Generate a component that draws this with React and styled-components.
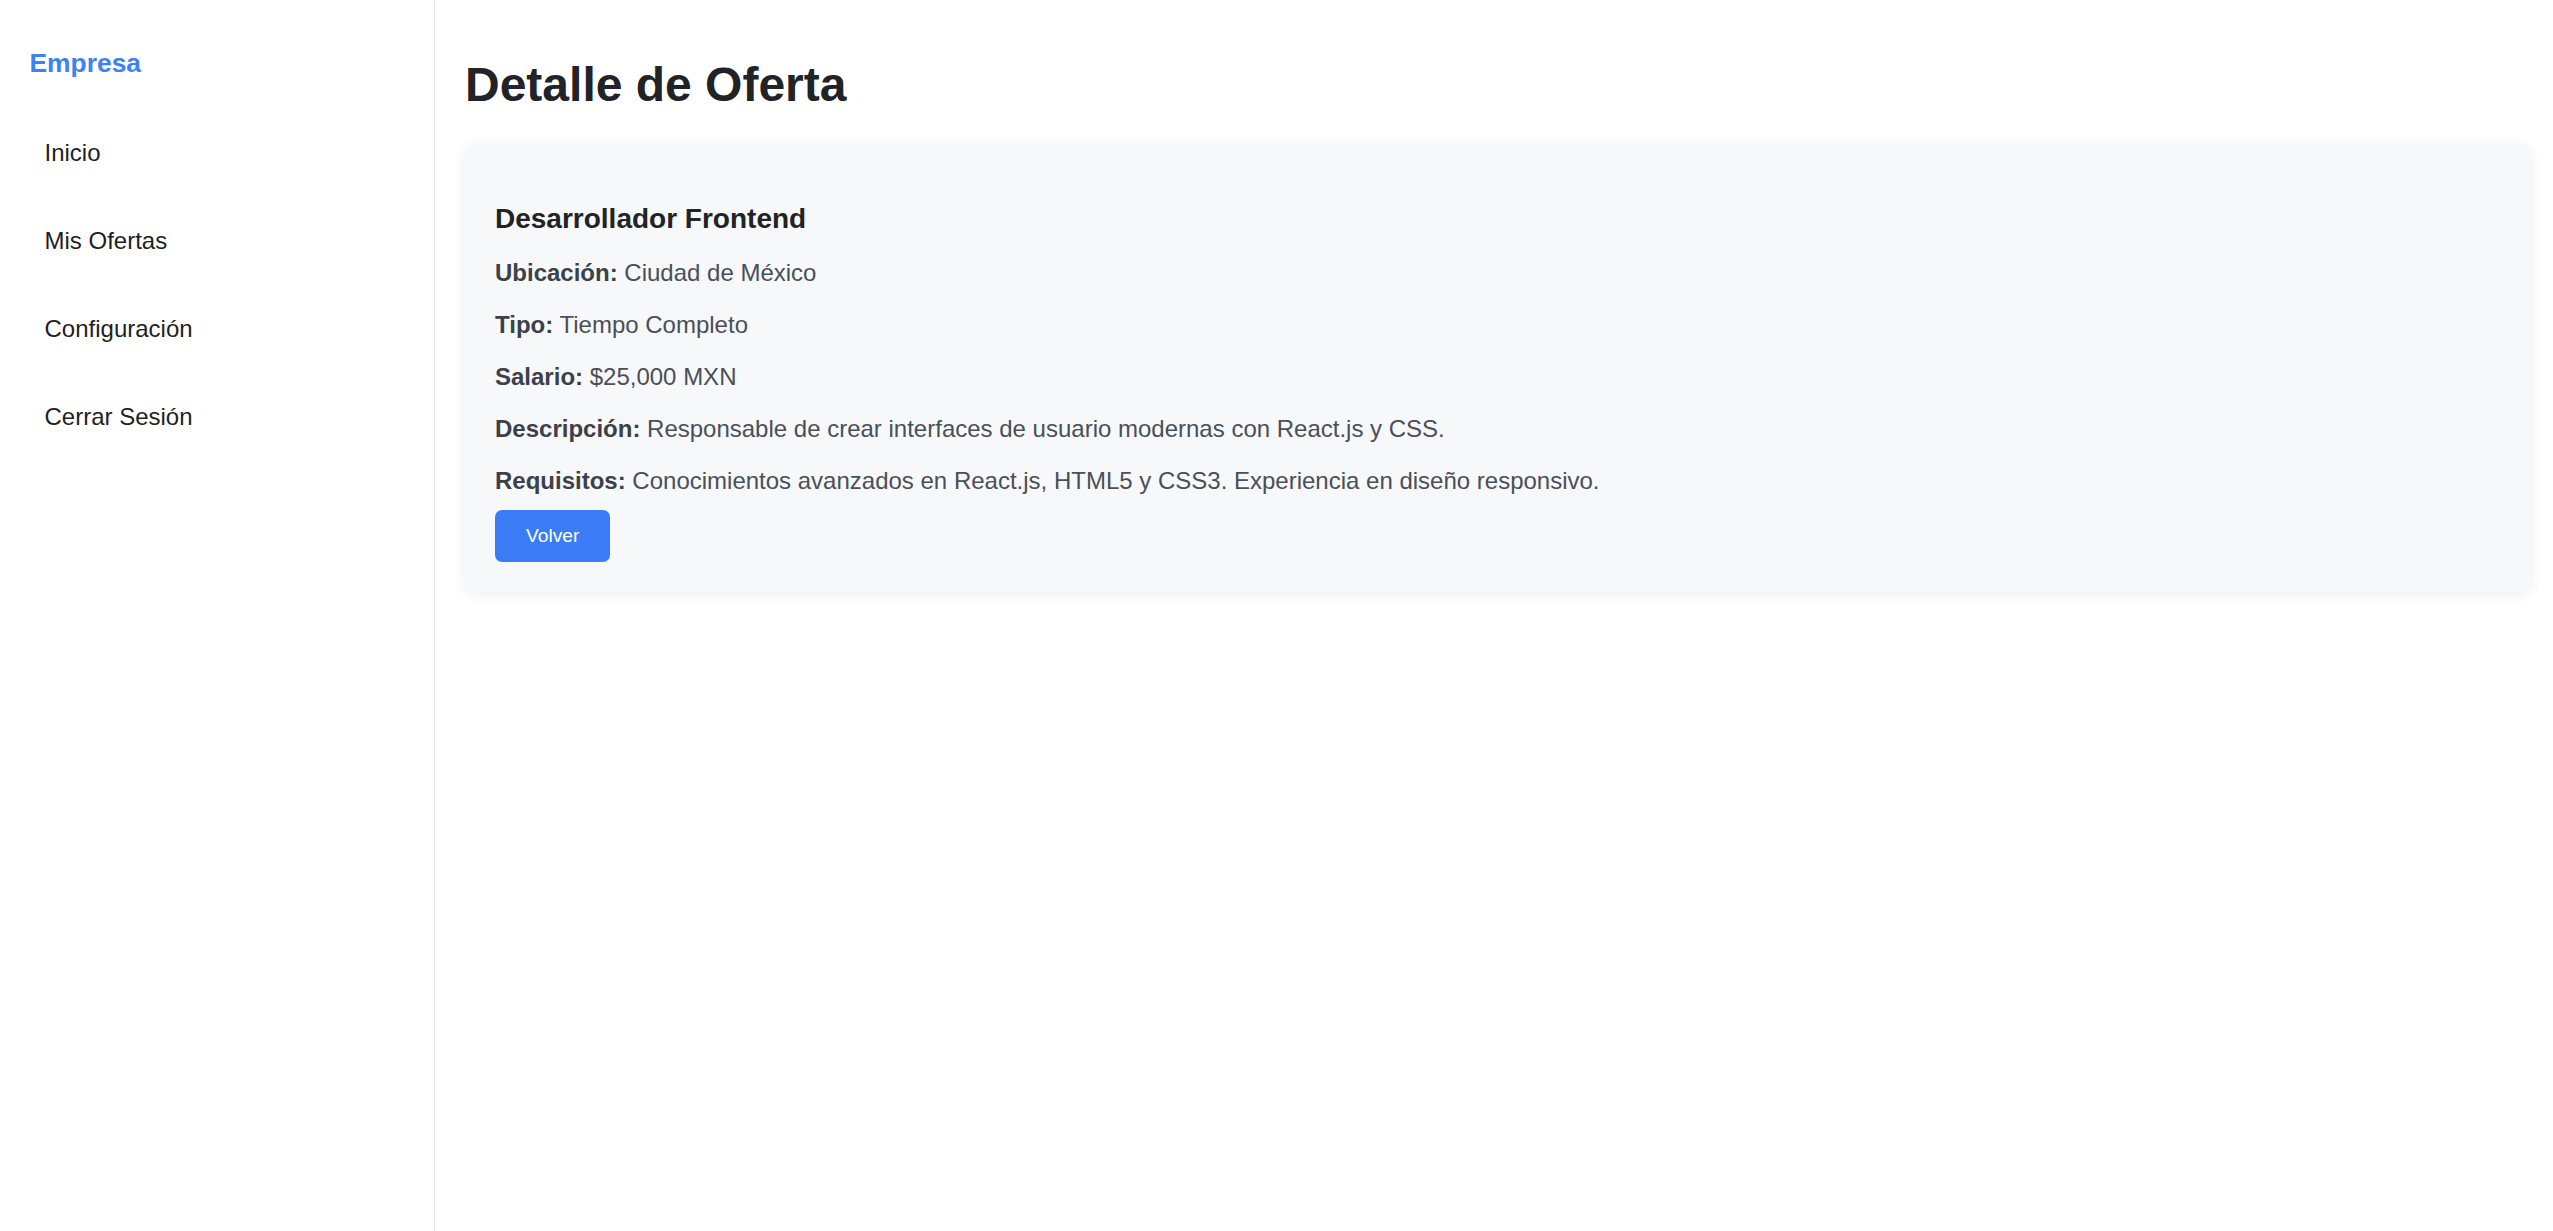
import React from "react";
import styled, { createGlobalStyle } from "styled-components";

const GlobalStyle = createGlobalStyle`
  html, body {
    margin: 0;
    padding: 0;
    background: #ffffff;
    font-family: "Liberation Sans", Arial, sans-serif;
  }
  * { box-sizing: border-box; }
`;

const Layout = styled.div`
  display: flex;
  min-height: 100vh;
  width: 100%;
`;

const Sidebar = styled.aside`
  flex: 0 0 435px;
  width: 435px;
  border-right: 1px solid #e3e5ea;
  background: #ffffff;
  padding: 47px 0 0 29.5px;
`;

const Brand = styled.div`
  font-size: 26.4px;
  line-height: 32px;
  font-weight: 700;
  color: #3b82f6;
  margin-bottom: 45.5px;
`;

const Nav = styled.nav`
  display: flex;
  flex-direction: column;
  gap: 32px;
`;

const NavLink = styled.a`
  display: block;
  padding: 14px 15px;
  font-size: 24px;
  line-height: 28px;
  color: #1f1f1f;
  text-decoration: none;
  cursor: pointer;
`;

const Main = styled.main`
  flex: 1;
  padding: 57px 23px 0 30px;
  min-width: 0;
`;

const Title = styled.h1`
  margin: 0 0 31px;
  font-size: 48px;
  line-height: 56px;
  font-weight: 700;
  color: #212327;
`;

const Card = styled.section`
  background: #f7f8fa;
  border-radius: 12px;
  box-shadow: 0 2px 14px rgba(0, 0, 0, 0.08);
  padding: 30px;
`;

const JobTitle = styled.h3`
  margin: 29px 0 24px;
  font-size: 28px;
  line-height: 32px;
  font-weight: 700;
  color: #212327;
`;

const InfoList = styled.div`
  display: flex;
  flex-direction: column;
  gap: 24px;
`;

const InfoLine = styled.p`
  margin: 0;
  font-size: 24px;
  line-height: 28px;
  color: #4a4f59;
`;

const Label = styled.strong`
  font-weight: 700;
  color: #3c4049;
`;

const BackButton = styled.button`
  margin-top: 15px;
  height: 52px;
  padding: 0 31px;
  border: none;
  border-radius: 7px;
  background: #3b7cf6;
  color: #ffffff;
  font-family: "Liberation Sans", Arial, sans-serif;
  font-size: 19.2px;
  cursor: pointer;
`;

const details = [
  ["Ubicación:", "Ciudad de México"],
  ["Tipo:", "Tiempo Completo"],
  ["Salario:", "$25,000 MXN"],
  ["Descripción:", "Responsable de crear interfaces de usuario modernas con React.js y CSS."],
  ["Requisitos:", "Conocimientos avanzados en React.js, HTML5 y CSS3. Experiencia en diseño responsivo."],
];

const navItems = ["Inicio", "Mis Ofertas", "Configuración", "Cerrar Sesión"];

export default function App() {
  return (
    <>
      <GlobalStyle />
      <Layout>
        <Sidebar>
          <Brand>Empresa</Brand>
          <Nav>
            {navItems.map((item) => (
              <NavLink key={item}>{item}</NavLink>
            ))}
          </Nav>
        </Sidebar>
        <Main>
          <Title>Detalle de Oferta</Title>
          <Card>
            <JobTitle>Desarrollador Frontend</JobTitle>
            <InfoList>
              {details.map(([label, value]) => (
                <InfoLine key={label}>
                  <Label>{label}</Label> {value}
                </InfoLine>
              ))}
            </InfoList>
            <BackButton>Volver</BackButton>
          </Card>
        </Main>
      </Layout>
    </>
  );
}
